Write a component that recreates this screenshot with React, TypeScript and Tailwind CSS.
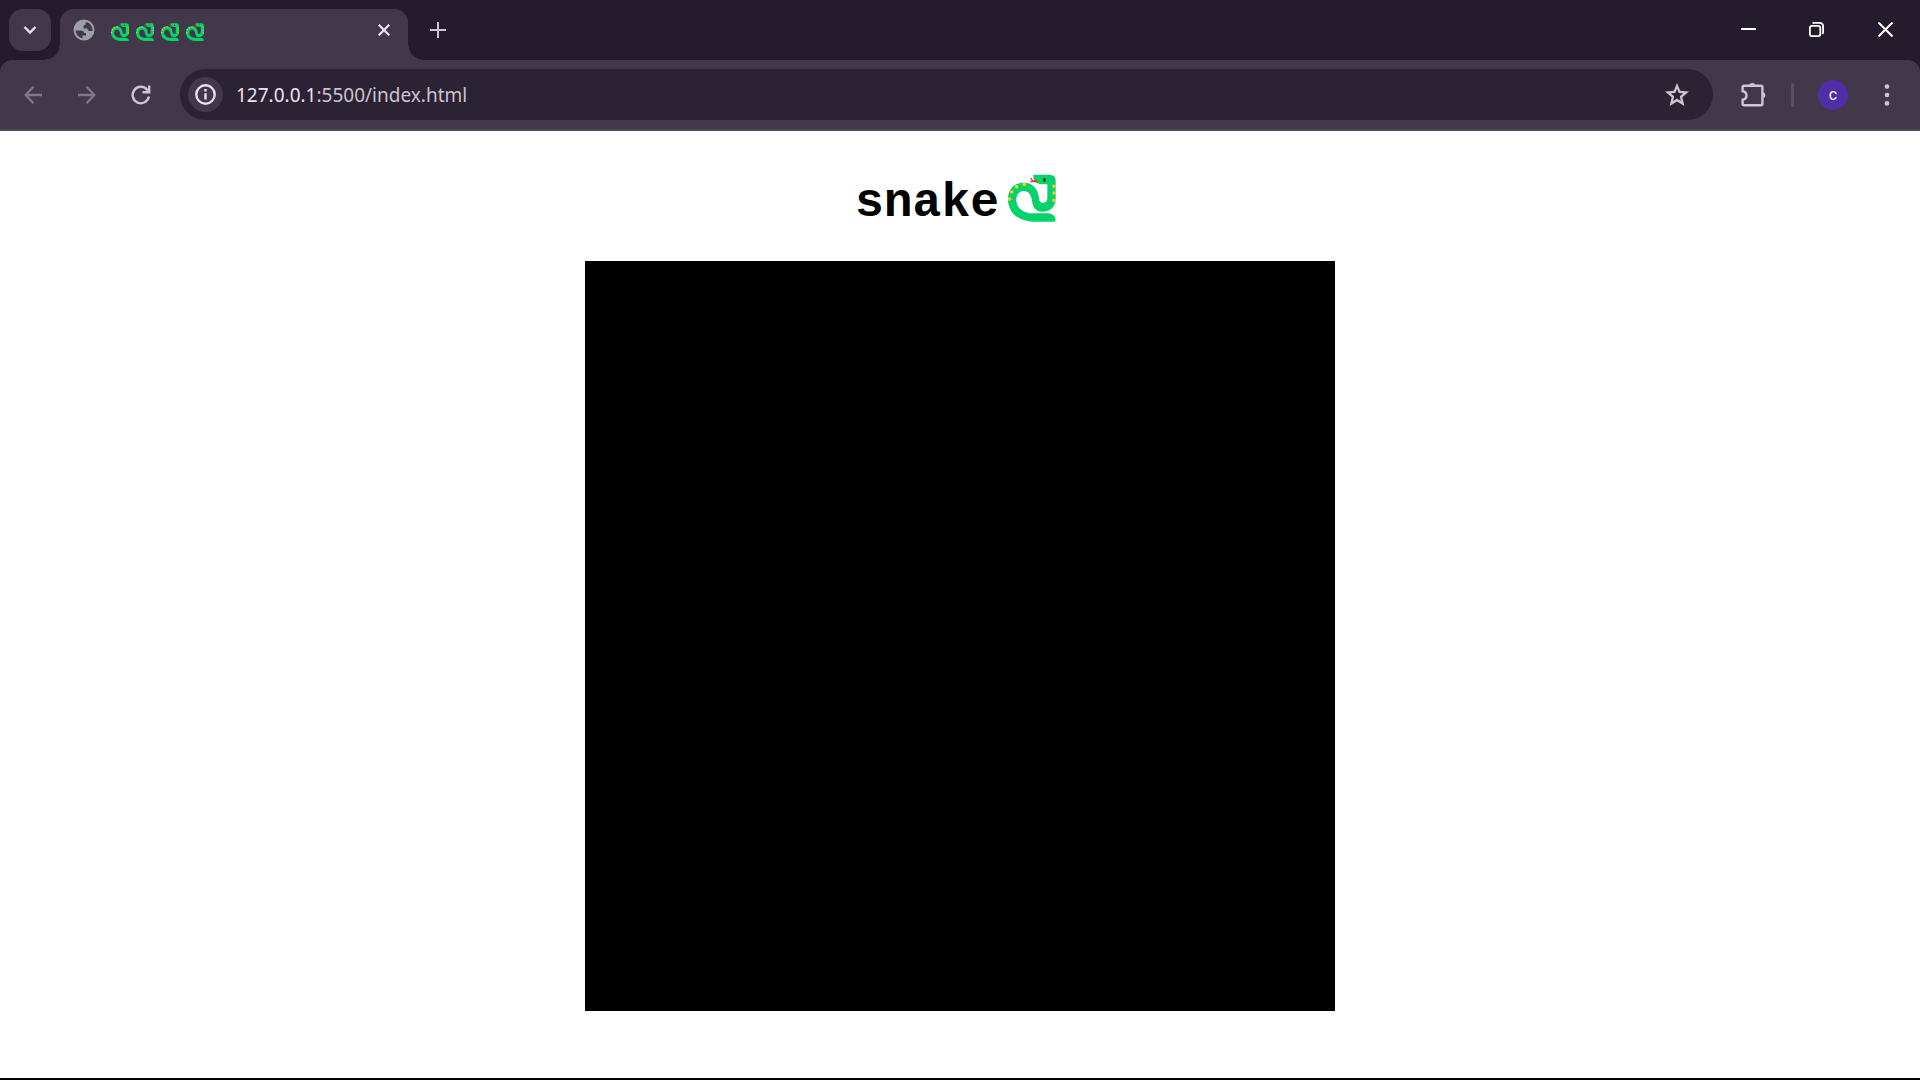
import React from "react";

function Snake({ className }: { className: string }) {
  return (
    <svg viewBox="0 0 144 144" className={className} role="img" aria-label="snake">
      <path
        fill="#04d36a"
        d="M76 2H124Q143 2 143 20V74C143 98 126 113 104 113C82 113 74 98 72 80C69 60 60 51 47 51C33 51 25 62 25 77C25 103 47 118 76 118H118C132 118 142 126 143 138Q143 143 138 143H76C31 143 0 114 0 77C0 45 19 26 47 26C75 26 90 44 93 73C94 82 97 87 105 87C113 87 118 81 118 73V31H105C87 31 76 22 76 9Z"
      />
      <path d="M66 12H70L75 19H88V25H67V22L71 20Z" fill="#f8312f" />
      <ellipse cx="109" cy="18" rx="3.500" ry="6" fill="#1c1c1c" />
      <g fill="#fcc72f">
        <circle cx="49" cy="31" r="5.500" />
        <circle cx="26" cy="38" r="5.500" />
        <circle cx="11" cy="54" r="5.500" />
        <circle cx="5" cy="75" r="5.500" />
        <circle cx="138" cy="37" r="5.500" />
        <circle cx="138" cy="57" r="5.500" />
        <circle cx="138" cy="79" r="5.500" />
      </g>
    </svg>
  );
}

function TabStrip() {
  return (
    <header className="flex h-[60px] items-start bg-[#241b2d]">
      <button aria-label="Search tabs" className="mt-[9px] ml-[9px] flex size-[42px] items-center justify-center rounded-[14px] bg-[#42384a] text-[#ebe0f0]">
        <svg viewBox="0 0 14 10" className="h-[10px] w-[14px]" fill="none" stroke="currentColor" strokeWidth="2.4">
          <path d="M1.5 2L7 7.5L12.500 2" />
        </svg>
      </button>
      <div className="relative mt-[9px] ml-[9px] flex h-[51px] w-[348px] items-start rounded-t-[14px] bg-[#42384a] px-[13px]">
        <span className="absolute bottom-0 -left-[15px] size-[15px] bg-[radial-gradient(circle_at_0_0,transparent_14px,#42384a_15px)]" />
        <span className="absolute -right-[15px] bottom-0 size-[15px] bg-[radial-gradient(circle_at_100%_0,transparent_14px,#42384a_15px)]" />
        <div className="flex h-[42px] w-full items-center">
          <svg viewBox="0 0 22 22" className="size-[22px]">
            <circle cx="11" cy="11" r="9.500" fill="none" stroke="#9aa0a6" strokeWidth="2" />
            <path d="M11 1.500C5 1.500 1.500 6 1.500 11.500H8C10 11.500 11 12.800 11 14H13V16.500H9.500V20.300C15.500 21 20 17 20.500 12H16.500C15 12 14.500 11 14.500 9.500H10.500V6.500C11.500 6.500 12.500 6 12.500 5V3.500H15Q13 1.500 11 1.500Z" fill="#9aa0a6" />
          </svg>
          <div className="ml-4 flex gap-[7px] pt-1">
            <Snake className="size-[18px]" />
            <Snake className="size-[18px]" />
            <Snake className="size-[18px]" />
            <Snake className="size-[18px]" />
          </div>
          <button aria-label="Close tab" className="mr-[5px] ml-auto text-[#ebe0f0]">
            <svg viewBox="0 0 12 12" className="size-3" stroke="currentColor" strokeWidth="2.200">
              <path d="M.7.7L11.300 11.300M11.300.7L.7 11.300" />
            </svg>
          </button>
        </div>
      </div>
      <button aria-label="New tab" className="mt-[22px] ml-[22px] text-[#d3c0dc]">
        <svg viewBox="0 0 16 16" className="size-4" stroke="currentColor" strokeWidth="2">
          <path d="M8 0V16M0 8H16" />
        </svg>
      </button>
      <div className="ml-auto flex h-[60px] items-start pt-[22px] pr-[27px] text-white">
        <button aria-label="Minimize" className="mr-[53px]">
          <svg viewBox="0 0 15 15" className="size-[15px]" fill="currentColor">
            <path d="M0 6H15V8H0Z" />
          </svg>
        </button>
        <button aria-label="Restore" className="mr-[54px]">
          <svg viewBox="0 0 15 15" className="size-[15px]" fill="none" stroke="currentColor" strokeWidth="1.800">
            <rect x=".9" y="3.800" width="10.400" height="10.300" rx="2" />
            <path d="M3.500 1.200Q4 .9 5 .9H10.500Q14.100.9 14.100 4.500V10Q14.100 11 13.400 11.800" />
          </svg>
        </button>
        <button aria-label="Close">
          <svg viewBox="0 0 15 15" className="size-[15px]" stroke="currentColor" strokeWidth="2">
            <path d="M.5.5L14.500 14.500M14.500.5L.5 14.500" />
          </svg>
        </button>
      </div>
    </header>
  );
}

function Toolbar() {
  return (
    <div className="bg-[#241b2d]">
      <nav className="flex h-[71px] items-center rounded-t-[12px] border-b-2 border-[#504a54] bg-[#42384a] pr-[30px] pl-6 text-[#d3c0dc]">
        <button aria-label="Back" className="text-[#81778a]">
          <svg viewBox="0 0 18 18" className="size-[18px]" fill="none" stroke="currentColor" strokeWidth="2.300">
            <path d="M9.500.8L1.500 9L9.500 17.200M1.500 9H18" />
          </svg>
        </button>
        <button aria-label="Forward" className="ml-9 text-[#81778a]">
          <svg viewBox="0 0 18 18" className="size-[18px]" fill="none" stroke="currentColor" strokeWidth="2.300">
            <path d="M8.500.8L16.500 9L8.500 17.200M16.500 9H0" />
          </svg>
        </button>
        <button aria-label="Reload" className="ml-[35px]">
          <svg viewBox="0 0 20 20" className="size-5" fill="none" stroke="currentColor" strokeWidth="2.400">
            <path d="M17.900 11.500A8.200 8.200 0 1 1 16 4.600L18 7M18.200.6V7.300H11.500" />
          </svg>
        </button>
        <div className="mr-7 ml-[29px] flex h-[51px] flex-1 items-center rounded-full bg-[#2b2234] pr-6 pl-2">
          <button aria-label="View site information" className="flex size-[35px] shrink-0 items-center justify-center rounded-full bg-[#42384a] text-[#ebe0f0]">
            <svg viewBox="0 0 21 21" className="size-[21px]" fill="none" stroke="currentColor" strokeWidth="2.400">
              <circle cx="10.500" cy="10.500" r="9.200" />
              <path d="M10.500 9.200V15.500M10.500 5V7.400" />
            </svg>
          </button>
          <a href="#game" className="ml-[13px] flex-1 font-['Noto_Sans','Open_Sans',sans-serif] text-[19px] leading-[28px] whitespace-nowrap text-[#cbc3cf]">
            <span className="text-[#ebe0f0]">127.0.0.1</span>:5500/index.html
          </a>
          <button aria-label="Bookmark this tab" className="text-[#cdc4d0]">
            <svg viewBox="0 0 24 24" className="size-6" fill="currentColor" fillRule="evenodd">
              <path d="M12 0L15.200 7.800L24 8.600L17.300 14.300L19.400 23L12 18.400L4.600 23L6.700 14.300L0 8.600L8.800 7.800ZM12 5.800L10.300 9.900L5.800 10.300L9.200 13.300L8.200 17.900L12 15.600L15.800 17.900L14.800 13.300L18.200 10.300L13.700 9.900Z" />
            </svg>
          </button>
        </div>
        <button aria-label="Extensions">
          <svg viewBox="0 0 26 26" className="size-[26px]" fill="none" stroke="currentColor" strokeWidth="2.400">
            <path d="M3.200 3.700H20Q21.400 3.700 21.400 5.200V21.700Q21.400 23.200 20 23.200H3.200Q1.600 23.200 1.600 21.700V17.700Q5.500 17 5.500 13.400T1.600 9.200V5.200Q1.600 3.700 3.200 3.700Z" />
            <path d="M8 3.500A3.400 3.400 0 0 1 14.500 3.500ZM22 10.100A3.400 3.400 0 0 1 22 16.600Z" fill="currentColor" stroke="none" />
          </svg>
        </button>
        <span className="ml-6 h-6 w-[3px] rounded bg-[#5b5063]" />
        <button aria-label="Profile" className="ml-6 size-[30px] rounded-full bg-[#512da8] font-[Roboto,sans-serif] text-[16px] leading-[30px] text-white">
          c
        </button>
        <button aria-label="Menu" className="ml-9">
          <svg viewBox="0 0 6 22" className="h-[22px] w-[6px]" fill="currentColor">
            <circle cx="3" cy="2.600" r="2.300" />
            <circle cx="3" cy="11" r="2.300" />
            <circle cx="3" cy="19.400" r="2.300" />
          </svg>
        </button>
      </nav>
    </div>
  );
}

export default function App() {
  return (
    <div className="flex min-h-screen flex-col bg-white">
      <TabStrip />
      <Toolbar />
      <main id="game" className="flex flex-1 flex-col items-center border-b-2 border-black pt-[43px]">
        <h1 className="flex items-start pr-[9px] font-['Liberation_Mono',monospace] text-[48px] leading-[58px] font-bold text-black">
          snake
          <Snake className="ml-[9px] size-12" />
        </h1>
        <canvas width={750} height={750} className="mt-[29px] bg-black" aria-label="Game board" />
      </main>
    </div>
  );
}
